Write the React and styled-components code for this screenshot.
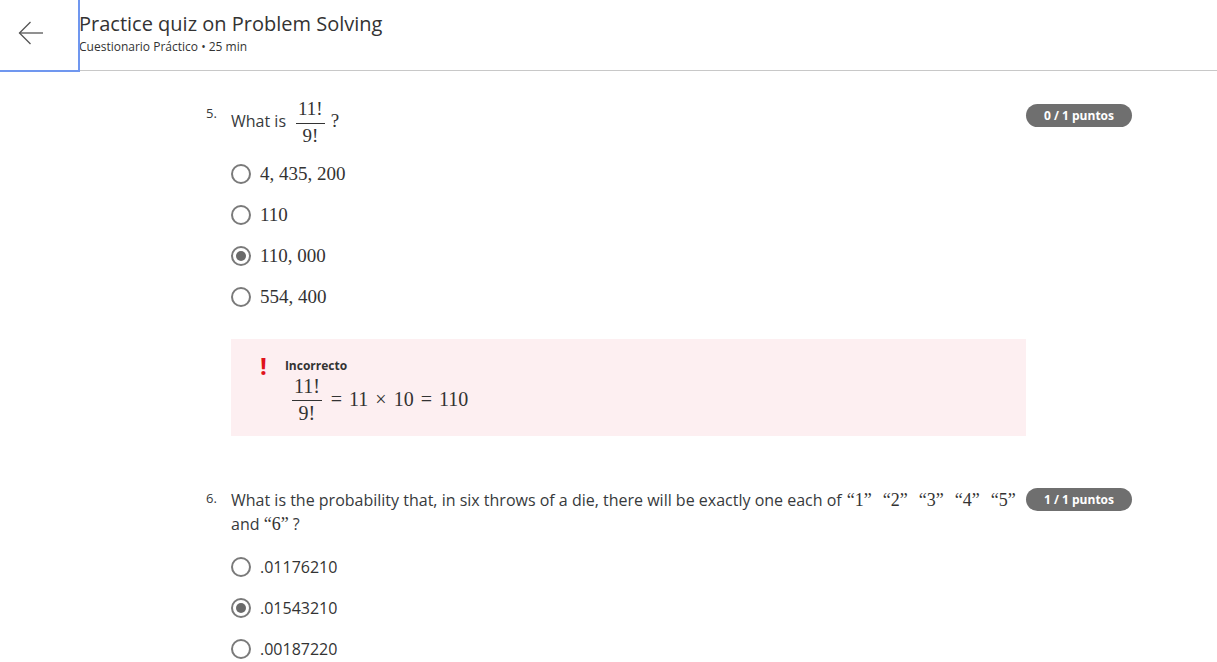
import React from 'react';
import styled, { createGlobalStyle } from 'styled-components';

const GlobalStyle = createGlobalStyle`
  body {
    margin: 0;
    background: #ffffff;
    font-family: "Open Sans", "Liberation Sans", sans-serif;
    color: #373a3c;
  }
`;

const Header = styled.header`
  display: flex;
  align-items: flex-start;
  height: 70px;
  border-bottom: 1px solid #c8c8c8;
`;

const BackButton = styled.button`
  flex: none;
  width: 80px;
  height: 72px;
  display: flex;
  align-items: flex-start;
  justify-content: flex-start;
  padding: 20px 0 0 18px;
  background: #fff;
  border: none;
  border-right: 2px solid #7097ef;
  border-bottom: 2px solid #7097ef;
  box-sizing: border-box;
  margin-right: -1px;
  position: relative;
  z-index: 1;
  cursor: pointer;
`;

const TitleBlock = styled.div`
  display: flex;
  flex-direction: column;
  padding-top: 10px;
`;

const Title = styled.h1`
  margin: 0;
  font-size: 20px;
  font-weight: 400;
  line-height: 28px;
  color: #333;
`;

const Subtitle = styled.div`
  font-size: 12px;
  line-height: 16px;
  color: #333;
  margin-top: 1px;
`;

const Main = styled.main`
  width: 926px;
  margin-left: 206px;
  padding-top: 27px;
`;

const Question = styled.section`
  margin-bottom: ${p => p.$gap || 0}px;
`;

const QuestionRow = styled.div`
  display: flex;
  align-items: flex-start;
`;

const Number = styled.div`
  flex: none;
  width: 25px;
  font-size: 13px;
  line-height: 20px;
  padding-top: ${p => p.$top || 0}px;
`;

const Prompt = styled.div`
  flex: 1;
  font-size: 16px;
  line-height: 24px;
  color: #373a3c;
  padding-right: 6px;
`;

const Math = styled.span`
  font-family: "Liberation Serif", "DejaVu Serif", serif;
  font-size: ${p => p.$size || 19}px;
  color: #333;
  margin-left: ${p => p.$ml || 0}px;
  white-space: nowrap;
`;

const Frac = styled.span`
  display: inline-flex;
  flex-direction: column;
  align-items: center;
  vertical-align: middle;
  margin: 0 ${p => p.$mr ?? 6}px 0 ${p => p.$ml ?? 10}px;
  font-family: "Liberation Serif", "DejaVu Serif", serif;
  font-size: ${p => p.$size || 19}px;
  line-height: 22px;
  color: #333;
`;

const Num = styled.span`
  padding: 0 2px 3px;
  border-bottom: 1px solid #333;
  align-self: stretch;
  text-align: center;
`;

const Den = styled.span`
  padding-top: 1px;
`;

const Badge = styled.div`
  flex: none;
  width: 106px;
  height: 23px;
  border-radius: 12px;
  background: #6f6f6f;
  color: #fff;
  font-size: 12px;
  font-weight: 700;
  line-height: 23px;
  text-align: center;
  margin-top: ${p => p.$top || 0}px;
`;

const Options = styled.div`
  display: flex;
  flex-direction: column;
  margin-left: 25px;
  margin-top: ${p => p.$top || 0}px;
`;

const Option = styled.label`
  display: flex;
  align-items: center;
  height: 41px;
  gap: 9px;
`;

const Radio = styled.span`
  flex: none;
  width: 20px;
  height: 20px;
  box-sizing: border-box;
  border: 2px solid #7a7a7a;
  border-radius: 50%;
  display: flex;
  align-items: center;
  justify-content: center;

  &::after {
    content: "";
    width: 10px;
    height: 10px;
    border-radius: 50%;
    background: ${p => (p.$checked ? '#6a6a6a' : 'transparent')};
  }
`;

const OptionText = styled.span`
  font-family: ${p => (p.$math ? '"Liberation Serif", "DejaVu Serif", serif' : '"Open Sans", sans-serif')};
  font-size: ${p => (p.$math ? 19 : 16)}px;
  color: #333;
`;

const Feedback = styled.div`
  margin: 22px 106px 0 25px;
  background: #fdeff1;
  padding: 15px 0 12px 29px;
  display: flex;
  gap: 18px;
`;

const Bang = styled.span`
  color: #e0121b;
  font-weight: 700;
  font-size: 24px;
  line-height: 24px;
`;

const FeedbackBody = styled.div`
  display: flex;
  flex-direction: column;
  padding-top: 4px;
`;

const FeedbackLabel = styled.div`
  font-size: 12px;
  font-weight: 700;
  line-height: 16px;
  color: #333;
`;

const Equation = styled.div`
  display: flex;
  align-items: center;
  margin-top: 1px;
`;

const ArrowIcon = () => (
  <svg width="26" height="26" viewBox="0 0 26 26" fill="none" stroke="#555" strokeWidth="1.3">
    <path d="M25 13H1.5" />
    <path d="M12.5 2L1.5 13l11 11" />
  </svg>
);

const options5 = [
  { text: '4, 435, 200' },
  { text: '110' },
  { text: '110, 000', checked: true },
  { text: '554, 400' },
];

const options6 = [
  { text: '.01176210' },
  { text: '.01543210', checked: true },
  { text: '.00187220' },
];

const equation = ['=', '11', '×', '10', '=', '110'];

export default function App() {
  return (
    <>
      <GlobalStyle />
      <Header>
        <BackButton aria-label="Back">
          <ArrowIcon />
        </BackButton>
        <TitleBlock>
          <Title>Practice quiz on Problem Solving</Title>
          <Subtitle>Cuestionario Práctico • 25 min</Subtitle>
        </TitleBlock>
      </Header>

      <Main>
        <Question $gap={52}>
          <QuestionRow>
            <Number $top={5}>5.</Number>
            <Prompt>
              What is
              <Frac>
                <Num>11!</Num>
                <Den>9!</Den>
              </Frac>
              <Math>?</Math>
            </Prompt>
            <Badge $top={6}>0 / 1 puntos</Badge>
          </QuestionRow>
          <Options $top={6}>
            {options5.map(o => (
              <Option key={o.text}>
                <Radio $checked={o.checked} />
                <OptionText $math>{o.text}</OptionText>
              </Option>
            ))}
          </Options>
          <Feedback>
            <Bang>!</Bang>
            <FeedbackBody>
              <FeedbackLabel>Incorrecto</FeedbackLabel>
              <Equation>
                <Frac $ml={7} $mr={2} $size={20}>
                  <Num>11!</Num>
                  <Den>9!</Den>
                </Frac>
                {equation.map((t, i) => (
                  <Math key={i} $size={20} $ml={7}>{t}</Math>
                ))}
              </Equation>
            </FeedbackBody>
          </Feedback>
        </Question>

        <Question>
          <QuestionRow>
            <Number>6.</Number>
            <Prompt>
              What is the probability that, in six throws of a die, there will be exactly one each of
              {['“1”', '“2”', '“3”', '“4”', '“5”'].map((q, i) => (
                <Math key={q} $size={18} $ml={i === 0 ? 5 : 11}>{q}</Math>
              ))}{' '}
              and <Math $size={18}>“6”</Math> ?
            </Prompt>
            <Badge>1 / 1 puntos</Badge>
          </QuestionRow>
          <Options $top={10}>
            {options6.map(o => (
              <Option key={o.text}>
                <Radio $checked={o.checked} />
                <OptionText>{o.text}</OptionText>
              </Option>
            ))}
          </Options>
        </Question>
      </Main>
    </>
  );
}
